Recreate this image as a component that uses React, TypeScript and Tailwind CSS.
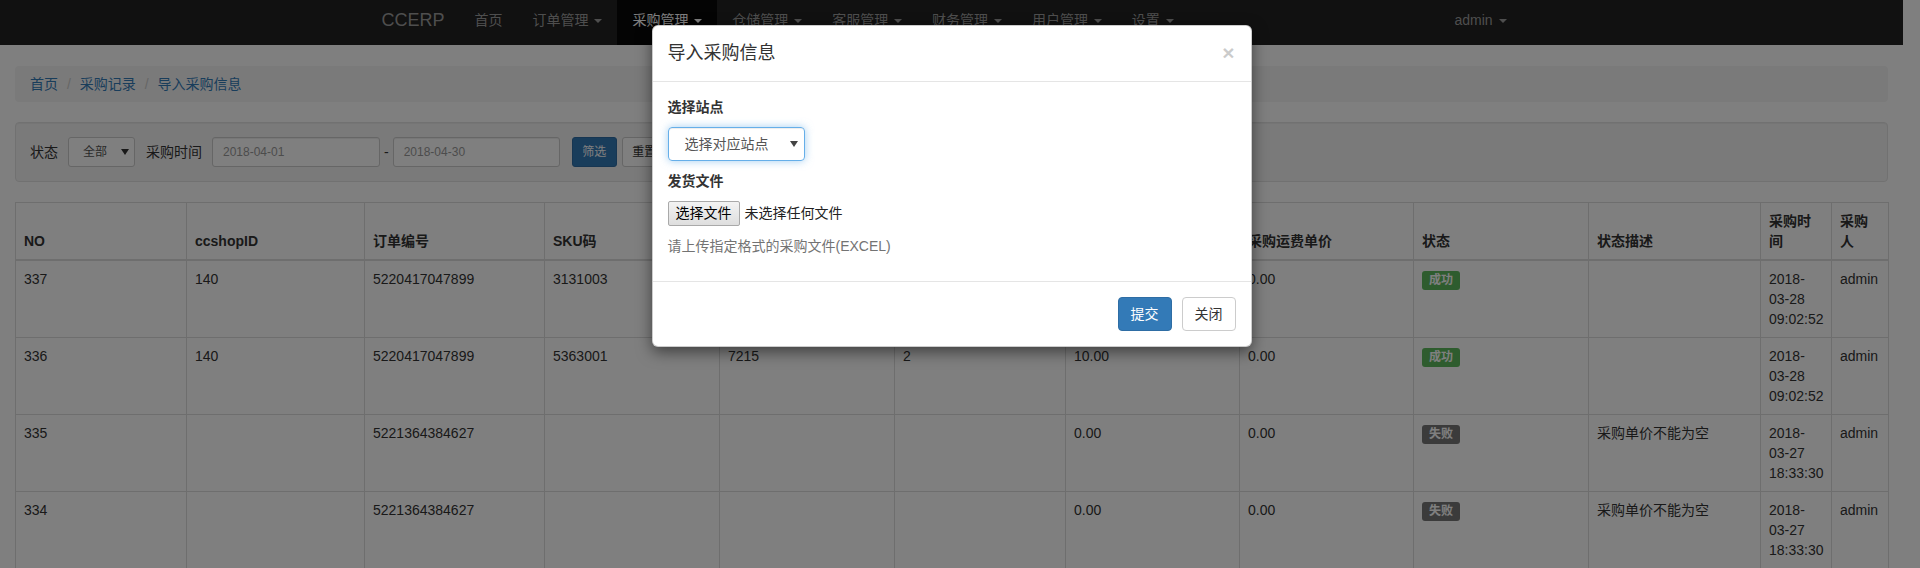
import React from 'react';

const FONT = 'font-[family-name:Liberation_Sans,Noto_Sans_CJK_SC,sans-serif]';

const Caret = () => (
  <span className="ml-[2px] inline-block h-0 w-0 border-x-[4px] border-t-[4px] border-x-transparent border-t-current align-middle" />
);

const SelectArrow = ({ color = '#333' }: { color?: string }) => (
  <svg width="8" height="6" viewBox="0 0 8 6">
    <polygon points="0,0 8,0 4,6" fill={color} />
  </svg>
);

const navItems = [
  { label: '首页', caret: false },
  { label: '订单管理', caret: true },
  { label: '采购管理', caret: true, active: true },
  { label: '仓储管理', caret: true },
  { label: '客服管理', caret: true },
  { label: '财务管理', caret: true },
  { label: '用户管理', caret: true },
  { label: '设置', caret: true },
];

const colWidths = ['w-[171px]', 'w-[178px]', 'w-[180px]', 'w-[175px]', 'w-[175px]', 'w-[171px]', 'w-[174px]', 'w-[174px]', 'w-[175px]', 'w-[172px]', 'w-[71px]', 'w-[57px]'];

const headers: React.ReactNode[] = [
  'NO', 'ccshopID', '订单编号', 'SKU码', '采购单号', '采购数量', '采购单价', '采购运费单价', '状态', '状态描述',
  <>采购时<br />间</>,
  <>采购<br />人</>,
];

const rows = [
  { no: '337', shop: '140', order: '5220417047899', sku: '3131003', c5: '7215', c6: '1', c7: '10.00', c8: '0.00', ok: true, desc: '', date: '03-28', time: '09:02:52' },
  { no: '336', shop: '140', order: '5220417047899', sku: '5363001', c5: '7215', c6: '2', c7: '10.00', c8: '0.00', ok: true, desc: '', date: '03-28', time: '09:02:52' },
  { no: '335', shop: '', order: '5221364384627', sku: '', c5: '', c6: '', c7: '0.00', c8: '0.00', ok: false, desc: '采购单价不能为空', date: '03-27', time: '18:33:30' },
  { no: '334', shop: '', order: '5221364384627', sku: '', c5: '', c6: '', c7: '0.00', c8: '0.00', ok: false, desc: '采购单价不能为空', date: '03-27', time: '18:33:30' },
];

const td = 'border border-[#ddd] p-[8px] align-top leading-[20px]';

export default function App() {
  return (
    <div className={`relative h-[568px] w-full overflow-hidden bg-white text-[14px] text-[#333] ${FONT}`}>
      <div className="w-[1903px]">
        {/* Navbar */}
        <nav className="h-[45px] bg-[#222]">
          <div className="mx-auto flex w-[1170px] px-[15px]">
            <a className="-ml-[15px] px-[15px] pt-[10px] pb-[15px] text-[18px] leading-[20px] text-[#9d9d9d]">CCERP</a>
            {navItems.map((item) => (
              <a
                key={item.label}
                className={`px-[15px] pt-[10px] pb-[15px] leading-[20px] ${item.active ? 'bg-[#080808] text-white' : 'text-[#9d9d9d]'}`}
              >
                {item.label}
                {item.caret && <>{' '}<Caret /></>}
              </a>
            ))}
            <a className="ml-auto px-[15px] pt-[10px] pb-[15px] leading-[20px] text-[#9d9d9d]">
              admin <Caret />
            </a>
          </div>
        </nav>

        <div className="px-[15px] pt-[21px]">
          {/* Breadcrumb */}
          <div className="mb-[20px] flex rounded-[4px] bg-[#f5f5f5] px-[15px] py-[8px] leading-[20px] text-[#337ab7]">
            <span>首页</span>
            <span className="ml-[4px] px-[5px] text-[#ccc]">/&nbsp;</span>
            <span>采购记录</span>
            <span className="ml-[4px] px-[5px] text-[#ccc]">/&nbsp;</span>
            <span>导入采购信息</span>
          </div>

          {/* Filter */}
          <div className="mb-[20px] flex items-center rounded-[4px] border border-[#e3e3e3] bg-[#f5f5f5] p-[14px] shadow-[inset_0_1px_1px_rgba(0,0,0,0.05)]">
            <span className="leading-[20px]">状态</span>
            <div className="ml-[10px] flex h-[30px] w-[67px] items-center rounded-[3px] border border-[#ccc] bg-white pl-[14px] pr-[5px] text-[12px] text-[#555]">
              <span>全部</span>
              <span className="ml-auto"><SelectArrow /></span>
            </div>
            <span className="ml-[11px] leading-[20px]">采购时间</span>
            <div className="ml-[10px] flex h-[30px] w-[168px] items-center rounded-[3px] border border-[#ccc] bg-white px-[10px] text-[12px] text-[#999] shadow-[inset_0_1px_1px_rgba(0,0,0,0.075)]">2018-04-01</div>
            <span className="mx-[4px]">-</span>
            <div className="flex h-[30px] w-[167px] items-center rounded-[3px] border border-[#ccc] bg-white px-[10px] text-[12px] text-[#999] shadow-[inset_0_1px_1px_rgba(0,0,0,0.075)]">2018-04-30</div>
            <button className="ml-[12px] h-[30px] w-[45px] rounded-[3px] border border-[#2e6da4] bg-[#337ab7] text-[12px] text-white">筛选</button>
            <button className="ml-[5px] h-[30px] w-[45px] rounded-[3px] border border-[#ccc] bg-white text-[12px] text-[#333]">重置</button>
          </div>

          {/* Table */}
          <table className="w-full table-fixed border-collapse border border-[#ddd]">
            <colgroup>
              {colWidths.map((w, i) => (
                <col key={i} className={w} />
              ))}
            </colgroup>
            <thead>
              <tr>
                {headers.map((h, i) => (
                  <th key={i} className="border border-b-2 border-[#ddd] p-[8px] text-left align-bottom font-bold leading-[20px]">
                    {h}
                  </th>
                ))}
              </tr>
            </thead>
            <tbody>
              {rows.map((r) => (
                <tr key={r.no}>
                  <td className={td}>{r.no}</td>
                  <td className={td}>{r.shop}</td>
                  <td className={td}>{r.order}</td>
                  <td className={td}>{r.sku}</td>
                  <td className={td}>{r.c5}</td>
                  <td className={td}>{r.c6}</td>
                  <td className={td}>{r.c7}</td>
                  <td className={td}>{r.c8}</td>
                  <td className={td}>
                    <span className={`mt-[2px] inline-block rounded-[3px] px-[7px] pt-[3px] pb-[4px] align-top text-[12px] font-bold leading-none text-white ${r.ok ? 'bg-[#5cb85c]' : 'bg-[#777]'}`}>
                      {r.ok ? '成功' : '失败'}
                    </span>
                  </td>
                  <td className={td}>{r.desc}</td>
                  <td className={td}>
                    2018-<br />
                    {r.date}<br />
                    {r.time}
                  </td>
                  <td className={td}>admin</td>
                </tr>
              ))}
            </tbody>
          </table>
        </div>
      </div>

      {/* Backdrop */}
      <div className="absolute inset-0 bg-black/50" />

      {/* Modal */}
      <div className="absolute top-0 left-0 flex w-[1903px] justify-center pt-[25px]">
        <div className="w-[600px] rounded-[6px] border border-black/20 bg-white shadow-[0_5px_15px_rgba(0,0,0,0.5)]">
          <div className="flex items-start border-b border-[#e5e5e5] p-[15px]">
            <h4 className="text-[18px] leading-[25px] text-[#333]">导入采购信息</h4>
            <span className="ml-auto -mt-[1px] mr-[1px] text-[21px] leading-[25px] font-bold text-black opacity-20">×</span>
          </div>
          <div className="p-[15px]">
            <div className="mb-[10px] font-bold leading-[20px]">选择站点</div>
            <div className="mb-[10px] flex h-[34px] w-[137px] items-center rounded-[4px] border border-[#66afe9] pl-[16px] pr-[6px] text-[#555] shadow-[inset_0_1px_1px_rgba(0,0,0,0.075),0_0_8px_rgba(102,175,233,0.6)]">
              <span className="leading-[20px]">选择对应站点</span>
              <span className="ml-auto"><SelectArrow color="#444" /></span>
            </div>
            <div className="mb-[10px] font-bold leading-[20px]">发货文件</div>
            <div className="mb-[10px] flex h-[25px] items-center">
              <div className="flex h-[25px] w-[72px] items-center justify-center rounded-[2px] border border-[#a9a9a9] bg-linear-to-b from-[#f3f3f3] to-[#dedede] text-black">选择文件</div>
              <span className="ml-[5px] text-[#222]">未选择任何文件</span>
            </div>
            <div className="mb-[10px] leading-[20px] text-[#737373]">请上传指定格式的采购文件(EXCEL)</div>
          </div>
          <div className="flex justify-end border-t border-[#e5e5e5] p-[15px]">
            <button className="h-[34px] w-[54px] rounded-[4px] border border-[#2e6da4] bg-[#337ab7] text-white">提交</button>
            <button className="ml-[10px] h-[34px] w-[54px] rounded-[4px] border border-[#ccc] bg-white text-[#333]">关闭</button>
          </div>
        </div>
      </div>
    </div>
  );
}
